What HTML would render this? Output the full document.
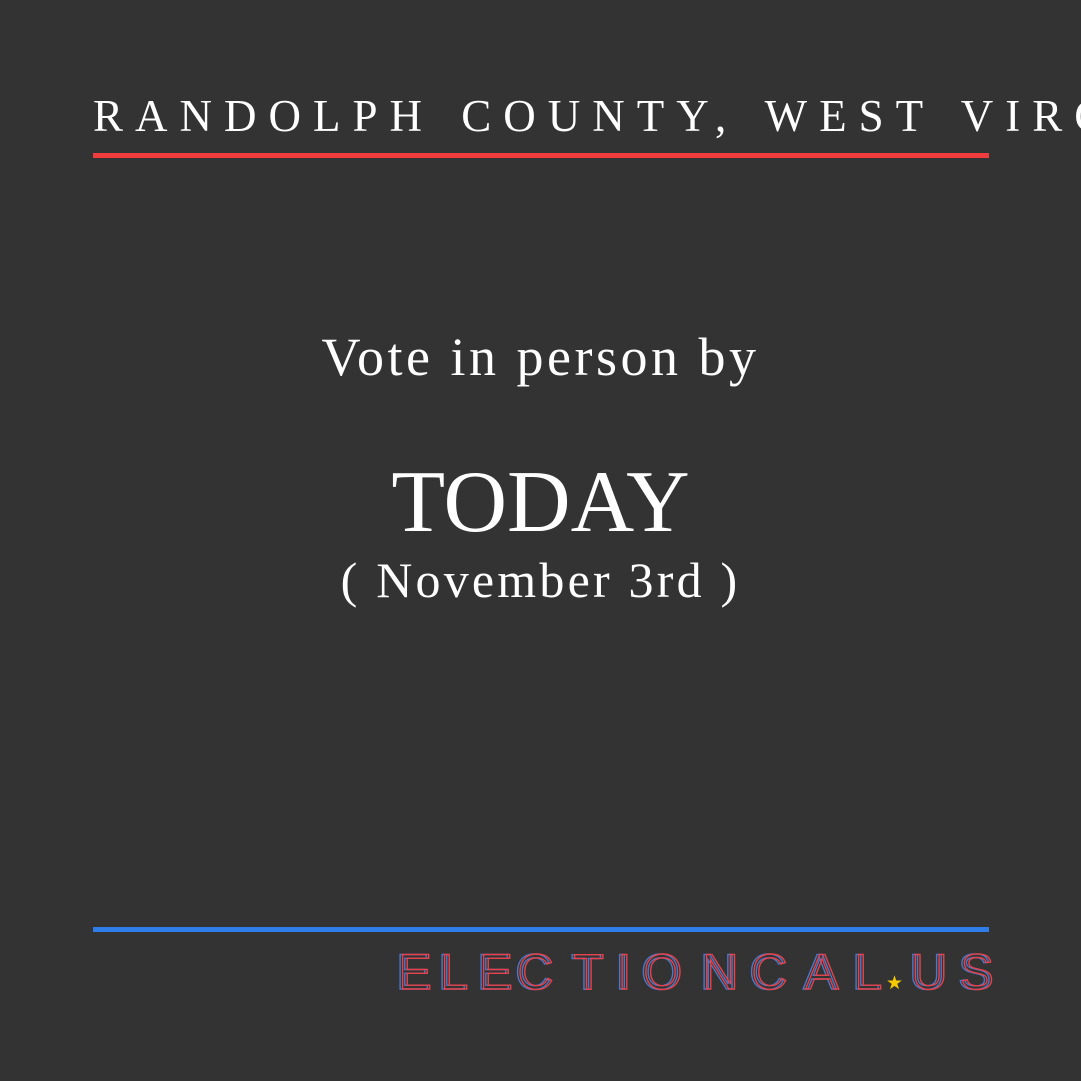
<!DOCTYPE html>
<html><head><meta charset="utf-8"><style>
html,body{margin:0;padding:0}
body{width:1081px;height:1081px;background:#333;position:relative;overflow:hidden;font-family:"Liberation Serif","DejaVu Serif",serif;color:#fff}
.hdr{position:absolute;left:93px;top:90px;width:988px;overflow:hidden;font-size:45px;letter-spacing:12px;word-spacing:4px;white-space:nowrap;line-height:52px}
.rl{position:absolute;left:93px;top:153px;width:896px;height:5px;background:#f03c3c}
.bl{position:absolute;left:93px;top:927px;width:896px;height:5px;background:#2f7de8}
.c{position:absolute;left:0;width:1081px;text-align:center;white-space:nowrap}
.L{position:absolute;top:946px;font-family:"Liberation Sans",sans-serif;font-size:50px;line-height:52px;color:transparent}
.L i{font-style:normal;position:absolute;left:0;top:0;-webkit-text-stroke:1.4px #4a78c8}
.L b{font-weight:normal;position:absolute;left:2.5px;top:0;-webkit-text-stroke:1.4px #e8414a}
</style></head><body>
<div class="hdr">RANDOLPH COUNTY, WEST VIRG</div>
<div class="rl"></div>
<div class="c" style="top:326px;font-size:54px;letter-spacing:3.5px">Vote in person by</div>
<div class="c" style="top:452px;font-size:88px">TODAY</div>
<div class="c" style="top:551px;font-size:50px;letter-spacing:3.2px">( November 3rd )</div>
<div class="bl"></div>
<div class="L" style="left:396px"><i>E</i><b>E</b></div>
<div class="L" style="left:438px"><i>L</i><b>L</b></div>
<div class="L" style="left:477px"><i>E</i><b>E</b></div>
<div class="L" style="left:515px"><i>C</i><b>C</b></div>
<div class="L" style="left:571px"><i>T</i><b>T</b></div>
<div class="L" style="left:615px"><i>I</i><b>I</b></div>
<div class="L" style="left:641px"><i>O</i><b>O</b></div>
<div class="L" style="left:700px"><i>N</i><b>N</b></div>
<div class="L" style="left:749px"><i>C</i><b>C</b></div>
<div class="L" style="left:803px"><i>A</i><b>A</b></div>
<div class="L" style="left:852px"><i>L</i><b>L</b></div>
<div class="L" style="left:909px"><i>U</i><b>U</b></div>
<div class="L" style="left:958px"><i>S</i><b>S</b></div>
<div style="position:absolute;left:886px;top:972px;color:#f5c800;font-size:19px;font-family:'DejaVu Sans',sans-serif">★</div>
</body></html>
